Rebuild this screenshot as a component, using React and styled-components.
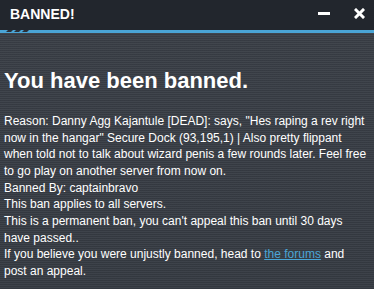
import React from 'react';
import styled, { createGlobalStyle } from 'styled-components';

const GlobalStyle = createGlobalStyle`
  html, body {
    margin: 0;
    padding: 0;
    background: #363b43;
  }
  body {
    font-family: 'Liberation Sans', Arial, sans-serif;
  }
`;

const StyledWindow = styled.div`
  width: 374px;
  height: 289px;
  overflow: hidden;
  display: flex;
  flex-direction: column;
  background: #363b43;
`;

const StyledTitleBar = styled.div`
  height: 30px;
  background: #22262d;
  display: flex;
  align-items: center;
  padding: 0 0 0 10px;
  flex-shrink: 0;
`;

const StyledTitle = styled.div`
  flex: 1;
  color: #ffffff;
  font-size: 14px;
  font-weight: bold;
  margin-top: -2px;
`;

const StyledTitleButton = styled.span`
  width: ${(p) => p.$width}px;
  display: flex;
  justify-content: center;
  align-items: center;
  margin-top: -3px;
`;

const StyledMinimize = styled.span`
  display: block;
  width: 12px;
  height: 3px;
  background: #ffffff;
`;

const StyledStripe = styled.div`
  height: 3px;
  flex-shrink: 0;
  background: #4aa5d6;
  position: relative;
`;

const StyledHatch = styled.div`
  position: absolute;
  left: 7px;
  top: 0;
  display: flex;
  gap: 3px;
`;

const StyledHatchMark = styled.span`
  display: block;
  width: 5px;
  height: 2px;
  background: #2a3038;
  transform: skewX(-45deg);
`;

const StyledContent = styled.div`
  flex: 1;
  padding: 34px 4px 0 4px;
  background: repeating-linear-gradient(
      to bottom,
      rgba(255, 255, 255, 0.035) 0,
      rgba(255, 255, 255, 0.035) 1px,
      rgba(0, 0, 0, 0.06) 1px,
      rgba(0, 0, 0, 0.06) 2px
    ),
    linear-gradient(to bottom, #3a3f47 0%, #363b43 100%);
  color: #ffffff;
`;

const StyledHeading = styled.h1`
  margin: 0 0 18px;
  font-size: 22px;
  font-weight: bold;
  line-height: 28px;
`;

const StyledBody = styled.div`
  font-size: 12px;
  line-height: 16.67px;
`;

const StyledLink = styled.a`
  color: #4aa5d6;
  text-decoration: underline;
`;

const CloseIcon = () => (
  <svg width="11" height="11" viewBox="0 0 11 11">
    <path d="M2 2 L9 9 M9 2 L2 9" stroke="#fff" strokeWidth="3" strokeLinecap="square" />
  </svg>
);

const App = () => (
  <StyledWindow>
    <GlobalStyle />
    <StyledTitleBar>
      <StyledTitle>BANNED!</StyledTitle>
      <StyledTitleButton $width={42}>
        <StyledMinimize />
      </StyledTitleButton>
      <StyledTitleButton $width={29}>
        <CloseIcon />
      </StyledTitleButton>
    </StyledTitleBar>
    <StyledStripe>
      <StyledHatch>
        <StyledHatchMark />
        <StyledHatchMark />
        <StyledHatchMark />
      </StyledHatch>
    </StyledStripe>
    <StyledContent>
      <StyledHeading>You have been banned.</StyledHeading>
      <StyledBody>
        Reason: Danny Agg Kajantule [DEAD]: says, "Hes raping a rev right now in the hangar" Secure
        Dock (93,195,1) | Also pretty flippant when told not to talk about wizard penis a few rounds
        later. Feel free to go play on another server from now on.
        <br />
        Banned By: captainbravo
        <br />
        This ban applies to all servers.
        <br />
        This is a permanent ban, you can't appeal this ban until 30 days have passed..
        <br />
        If you believe you were unjustly banned, head to <StyledLink href="#">the forums</StyledLink>{' '}
        and post an appeal.
      </StyledBody>
    </StyledContent>
  </StyledWindow>
);

export default App;
